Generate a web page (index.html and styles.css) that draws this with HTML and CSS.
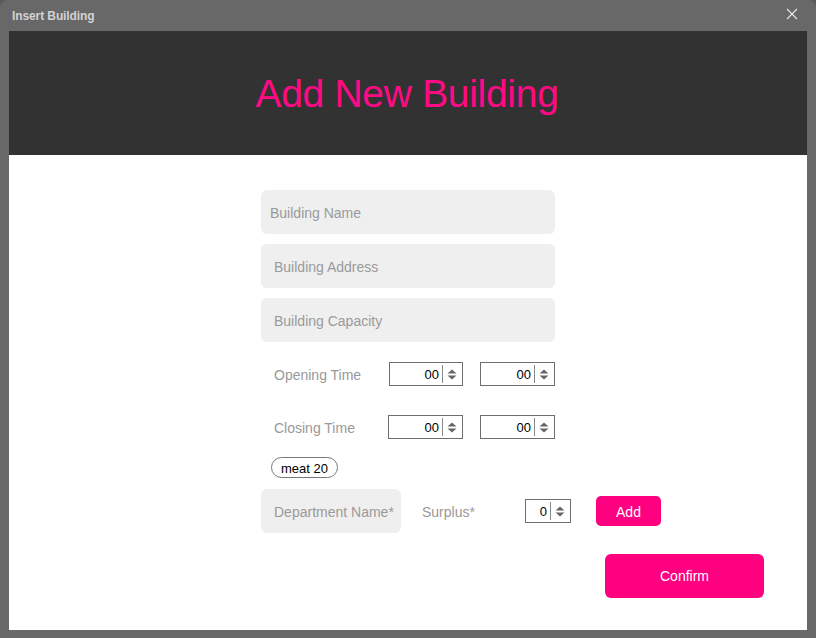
FILE: index.html
```html
<!DOCTYPE html>
<html>
<head>
<meta charset="utf-8">
<link rel="stylesheet" href="styles.css">
</head>
<body>
<div class="window">
  <div class="titlebar">
    <span class="wtitle">Insert Building</span>
    <svg class="close" width="12" height="12" viewBox="0 0 12 12"><path d="M1 1L11 11M11 1L1 11" stroke="#e6e6e6" stroke-width="1.1" fill="none"/></svg>
  </div>
  <div class="content">
    <div class="header"><h1>Add New Building</h1></div>
    <div class="form">
      <div class="field first">Building Name</div>
      <div class="field">Building Address</div>
      <div class="field">Building Capacity</div>
      <div class="timerow open">
        <span class="tlabel">Opening Time</span>
        <div class="spin w74"><span class="val">00</span><span class="div"></span><svg class="arr" width="10" height="11" viewBox="0 0 10 11"><path d="M5 0.5L9.5 4.5H0.5Z M5 10.5L9.5 6.5H0.5Z" fill="#666"/></svg></div>
        <div class="spin w75"><span class="val">00</span><span class="div"></span><svg class="arr" width="10" height="11" viewBox="0 0 10 11"><path d="M5 0.5L9.5 4.5H0.5Z M5 10.5L9.5 6.5H0.5Z" fill="#666"/></svg></div>
      </div>
      <div class="timerow close-row">
        <span class="tlabel">Closing Time</span>
        <div class="spin w75"><span class="val">00</span><span class="div"></span><svg class="arr" width="10" height="11" viewBox="0 0 10 11"><path d="M5 0.5L9.5 4.5H0.5Z M5 10.5L9.5 6.5H0.5Z" fill="#666"/></svg></div>
        <div class="spin w75"><span class="val">00</span><span class="div"></span><svg class="arr" width="10" height="11" viewBox="0 0 10 11"><path d="M5 0.5L9.5 4.5H0.5Z M5 10.5L9.5 6.5H0.5Z" fill="#666"/></svg></div>
      </div>
      <div class="chips"><span class="chip">meat 20</span></div>
      <div class="deptrow">
        <div class="dept">Department Name*</div>
        <span class="surplus">Surplus*</span>
        <div class="spin w46"><span class="val">0</span><span class="div"></span><svg class="arr" width="10" height="11" viewBox="0 0 10 11"><path d="M5 0.5L9.5 4.5H0.5Z M5 10.5L9.5 6.5H0.5Z" fill="#666"/></svg></div>
        <button class="add">Add</button>
      </div>
      <div class="confirmrow"><button class="confirm">Confirm</button></div>
    </div>
  </div>
</div>
</body>
</html>
```

FILE: styles.css
```css
* { box-sizing: border-box; }
html, body { margin: 0; padding: 0; }
body { width: 816px; height: 638px; overflow: hidden; font-family: "Liberation Sans", Arial, sans-serif; background: #5a5a5a; }
.window { width: 816px; height: 638px; background: #686868; border-radius: 8px 8px 0 0; display: flex; flex-direction: column; }
.titlebar { height: 31px; display: flex; align-items: center; justify-content: space-between; padding: 0 18px 1px 12px; }
.wtitle { font-size: 12px; font-weight: bold; color: #d2d2d2; letter-spacing: -0.1px; padding-top: 1px; }
.close { margin-top: -2px; }
.content { margin: 0 9px 8px 9px; background: #fff; flex: 1; display: flex; flex-direction: column; }
.header { height: 124px; background: #323232; display: flex; align-items: center; justify-content: center; }
.header h1 { margin: 0; font-weight: normal; font-size: 39px; color: #ff0a84; letter-spacing: -0.3px; padding-top: 2px; padding-right: 2px; }
.form { padding: 35px 0 0 252px; display: flex; flex-direction: column; }
.field { width: 294px; height: 44px; background: #efefef; border-radius: 6px; color: #9a9a9a; font-size: 14px; display: flex; align-items: center; padding: 2px 0 0 13px; margin-bottom: 10px; }
.field.first { padding-left: 9px; padding-top: 1px; }
.timerow { display: flex; align-items: center; height: 24px; padding-left: 13px; }
.timerow.open { margin-top: 10px; }
.timerow.close-row { margin-top: 29px; }
.tlabel { width: 115px; color: #999; font-size: 14px; padding-top: 1px; }
.close-row .tlabel { width: 114px; padding-top: 2px; }
.spin { height: 24px; border: 1px solid #6e6e6e; display: flex; align-items: center; font-size: 13px; color: #000; margin-right: 17px; }
.w74 { width: 74px; }
.w75 { width: 75px; }
.w46 { width: 46px; }
.val { flex: 1; text-align: right; padding-right: 3px; padding-top: 1px; }
.div { width: 1px; height: 18px; background: #8a8a8a; }
.arr { margin: 0 5px 0 4px; }
.chips { margin-top: 18px; padding-left: 10px; height: 21px; display: flex; }
.chip { height: 21px; border: 1px solid #777; border-radius: 11px; font-size: 13px; color: #000; padding: 1px 9px 0; display: flex; align-items: center; }
.deptrow { margin-top: 11px; display: flex; align-items: center; height: 44px; }
.dept { width: 140px; height: 44px; background: #efefef; border-radius: 6px; color: #9a9a9a; font-size: 14px; display: flex; align-items: center; padding: 2px 0 0 13px; white-space: nowrap; }
.surplus { color: #999; font-size: 14px; margin-left: 21px; width: 103px; padding-top: 2px; }
.deptrow .spin { margin-right: 25px; height: 24px; }
.add { width: 65px; height: 30px; border: none; border-radius: 5px; background: #ff0080; color: #fff; font-family: "Liberation Sans", Arial, sans-serif; font-size: 14px; padding: 2px 0 0; }
.confirmrow { margin-top: 21px; padding-left: 344px; }
.confirm { width: 159px; height: 44px; border: none; border-radius: 6px; background: #ff0080; color: #fff; font-family: "Liberation Sans", Arial, sans-serif; font-size: 14px; padding: 0; }
```
